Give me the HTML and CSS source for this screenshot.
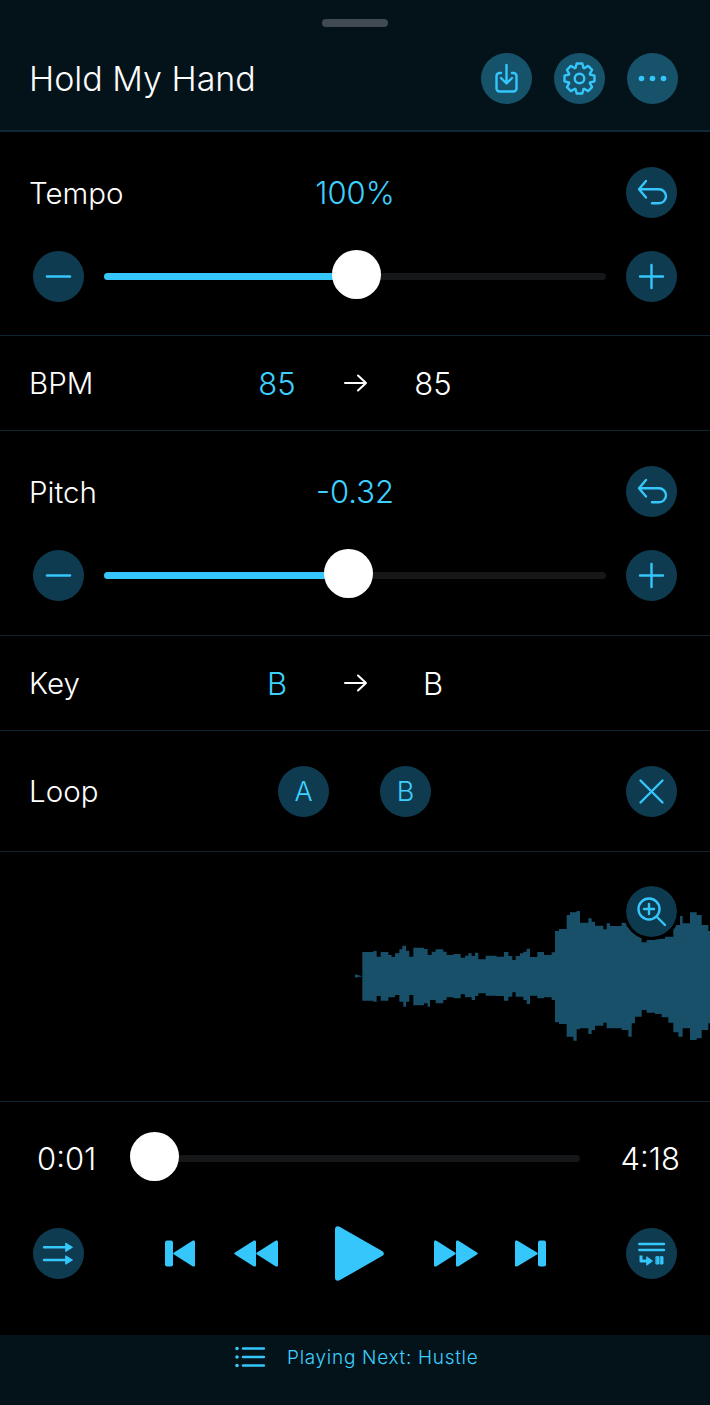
FILE: index.html
```html
<!doctype html>
<html>
<head>
    <meta charset="utf-8" />
    <title>Hold My Hand</title>
    <link rel="stylesheet" href="styles.css">
</head>
<body>
<svg class="defs" width="0" height="0">
    <symbol id="i-undo" viewBox="0 0 51 51"><path d="M20 14l-7 8.300 7 8.200M13 22.300h20a7 7 0 0 1 0 14h-7" /></symbol>
    <symbol id="i-minus" viewBox="0 0 51 51"><path d="M14 25.500h23" /></symbol>
    <symbol id="i-plus" viewBox="0 0 51 51"><path d="M14 25.500h23M25.500 14v23" /></symbol>
</svg>
<div class="screen">
    <header class="top">
        <div class="top__grip"></div>
        <h1 class="top__title">Hold My Hand</h1>
        <div class="top__actions">
            <button class="round round--bright">
                <svg class="icon" viewBox="0 0 51 51"><path d="M20 20h-1.500a3 3 0 0 0-3 3v12.500a3 3 0 0 0 3 3h14a3 3 0 0 0 3-3V23a3 3 0 0 0-3-3H31M25.500 12v18M20 25l5.500 5.500L31 25" /></svg>
            </button>
            <button class="round round--bright">
                <svg class="icon" viewBox="-25.500 -25.500 51 51"><circle r="4.800" /><polygon points="-4,-10.500 -2.800,-15 2.800,-15 4,-10.500 4.600,-10.250 8.630,-12.590 12.590,-8.630 10.250,-4.600 10.500,-4 15,-2.800 15,2.800 10.500,4 10.250,4.600 12.590,8.630 8.630,12.590 4.600,10.250 4,10.500 2.800,15 -2.800,15 -4,10.500 -4.600,10.250 -8.630,12.590 -12.590,8.630 -10.250,4.600 -10.500,4 -15,2.800 -15,-2.800 -10.500,-4 -10.250,-4.600 -12.590,-8.630 -8.630,-12.590 -4.600,-10.250" /></svg>
            </button>
            <button class="round round--bright">
                <svg class="icon icon--solid" viewBox="0 0 51 51"><circle cx="14.500" cy="25.500" r="2.800" /><circle cx="25.500" cy="25.500" r="2.800" /><circle cx="36.500" cy="25.500" r="2.800" /></svg>
            </button>
        </div>
    </header>

    <section class="panel">
        <div class="panel__head">
            <span class="label">Tempo</span>
            <span class="value">100%</span>
            <button class="round panel__reset"><svg class="icon"><use href="#i-undo" /></svg></button>
        </div>
        <div class="panel__slider">
            <button class="round"><svg class="icon"><use href="#i-minus" /></svg></button>
            <div class="track"><div class="track__fill" style="width:50.2%"></div><div class="track__thumb" style="left:50.2%"></div></div>
            <button class="round"><svg class="icon"><use href="#i-plus" /></svg></button>
        </div>
    </section>

    <section class="change">
        <span class="label">BPM</span>
        <span class="value">85</span>
        <svg class="change__arrow" viewBox="0 0 26 20"><path d="M2 10h21M15 2.500l8 7.500-8 7.500" /></svg>
        <span class="change__to">85</span>
    </section>

    <section class="panel panel--tall">
        <div class="panel__head">
            <span class="label">Pitch</span>
            <span class="value">-0.32</span>
            <button class="round panel__reset"><svg class="icon"><use href="#i-undo" /></svg></button>
        </div>
        <div class="panel__slider">
            <button class="round"><svg class="icon"><use href="#i-minus" /></svg></button>
            <div class="track"><div class="track__fill" style="width:48.8%"></div><div class="track__thumb" style="left:48.8%"></div></div>
            <button class="round"><svg class="icon"><use href="#i-plus" /></svg></button>
        </div>
    </section>

    <section class="change">
        <span class="label">Key</span>
        <span class="value">B</span>
        <svg class="change__arrow" viewBox="0 0 26 20"><path d="M2 10h21M15 2.500l8 7.500-8 7.500" /></svg>
        <span class="change__to">B</span>
    </section>

    <section class="loop">
        <span class="label loop__label">Loop</span>
        <button class="round round--text">A</button>
        <button class="round round--text">B</button>
        <button class="round loop__clear">
            <svg class="icon" viewBox="0 0 51 51"><path d="M14.500 14.500l22 22M36.500 14.500l-22 22" /></svg>
        </button>
    </section>

    <section class="wave">
        <svg class="wave__shape" viewBox="-1020 -24 2130 750">
            <path d="M45 343L67 349V276H100V273H110V290H122V276H145V285H155V291H165V280H178V268H187V257H198V272H208V290H220V263H252V267H263V258V285H275V275H287V268H310V275H320V285H340V282H362V293H375V287H385V280H395V288H405V278H415V298H437V287H470V290H492V276H505V288H517V300H527V288H540V280H550V275H560V266H570V291H592V276H612V285H635V277H645V213H657V207H680V165H690V157H710V153H720V188H745V175H755V185H765V197H790V208H800V190H810V198H845V188H860V200H905V247H920V240H945V236H975V230H1000V195H1020V168H1028V190H1050V157H1070V165H1085V195H1105V213H1110V490H1105V510H1085V535H1070V540H1050V505H1028V530H1015V517H1000V488H985V472H965V462H945V458H920V450H905V470H885V490H875V530H865V510H845V505H800V488H790V497H765V510H755V522H745V505H720V508H710V542H700V530H680V492H657V487H645V420H635V412H612V415H592V407H570V432H560V420H550V410H527V397H517V410H505V422H492V408H470V407H437V400H415V408H405V420H395V412H375V403H362V415H340V412H320V420H310V430H287V420H270V440H263V430H252V436H220V405H208V425H198V440H190V425H178V405H165V412H145V422H122V408H110V425H100V422H67V349L45 353Z" />
        </svg>
        <button class="round wave__zoom">
            <svg class="icon" viewBox="0 0 51 51"><circle cx="23" cy="23" r="10.500" /><path d="M23 18v10M18 23h10M31 31l8 8" /></svg>
        </button>
    </section>

    <section class="player">
        <div class="player__time">
            <span class="time">0:01</span>
            <div class="track track--time"><div class="track__thumb" style="left:0"></div></div>
            <span class="time">4:18</span>
        </div>
        <div class="player__controls">
            <button class="round">
                <svg class="icon" viewBox="0 0 51 51"><path d="M11 19.300h24M11 32h24" /><path class="icon__fill" d="M33 15.300l6.500 4-6.500 4zM33 28l6.500 4-6.500 4z" /></svg>
            </button>
            <div class="transport">
                <svg class="transport__prev" viewBox="0 0 31 27"><rect x="0" y="0.500" width="8" height="26" rx="2" /><path d="M30 2v23c0 1.500-1 2-2.500 1.200L9 14.500c-1-.6-1-1.400 0-2L27.500.8C29 0 30 .5 30 2z" /></svg>
                <svg class="transport__back" viewBox="0 0 44 27"><path d="M22 2v23c0 1.500-1 2-2.500 1.200L1 14.500c-1-.6-1-1.400 0-2L19.500.8C21 0 22 .5 22 2z" /><path d="M44 2v23c0 1.500-1 2-2.500 1.200L23 14.500c-1-.6-1-1.400 0-2L41.500.8C43 0 44 .5 44 2z" /></svg>
                <svg class="transport__play" viewBox="0 0 49 55"><path d="M0 3.500v48c0 3 2.500 4 5 2.600l42-24c2.500-1.400 2.500-3.800 0-5.200L5 .9C2.500-.5 0 .5 0 3.500z" /></svg>
                <svg class="transport__next" viewBox="0 0 44 27"><path d="M0 2v23c0 1.500 1 2 2.500 1.200L21 14.500c1-.6 1-1.400 0-2L2.500.8C1 0 0 .5 0 2z" /><path d="M22 2v23c0 1.500 1 2 2.500 1.200L43 14.500c1-.6 1-1.400 0-2L24.500.8C23 0 22 .5 22 2z" /></svg>
                <svg class="transport__last" viewBox="0 0 31 27"><rect x="23" y="0.500" width="8" height="26" rx="2" /><path d="M0 2v23c0 1.500 1 2 2.500 1.200L22 14.500c1-.6 1-1.400 0-2L2.500.8C1 0 0 .5 0 2z" /></svg>
            </div>
            <button class="round">
                <svg class="icon" viewBox="0 0 51 51"><path d="M13.300 16h24.700M13.300 22h24.700" /><path class="icon__hook" d="M15 27.500v5.500h7" /><path class="icon__fill" d="M21 29l5.500 4-5.500 4zM30.300 28.700h2.500V36h-2.500zM34.500 28.700H37V36h-2.500z" /></svg>
            </button>
        </div>
    </section>

    <footer class="next">
        <svg class="next__icon" viewBox="0 0 30 22"><circle cx="2" cy="2.500" r="1.800" /><circle cx="2" cy="11" r="1.800" /><circle cx="2" cy="19.500" r="1.800" /><path d="M8 2.500h21M8 11h21M8 19.500h21" /></svg>
        <span class="next__text">Playing Next: Hustle</span>
    </footer>
</div>
</body>
</html>
```

FILE: styles.css
```css
* {
    box-sizing: border-box;
}
html, body {
    margin: 0;
    background-color: #000;
}
body {
    font-family: Inter, "Liberation Sans", sans-serif;
    font-weight: 300;
    color: #fff;
}
.defs {
    position: absolute;
}
.screen {
    width: 710px;
    height: 1405px;
    display: flex;
    flex-direction: column;
    overflow: hidden;
}

/* round buttons */
.round {
    flex: none;
    width: 51px;
    height: 51px;
    padding: 0;
    border: 0;
    border-radius: 50%;
    background-color: #0f3b50;
    color: #3dd0ff;
    font-family: inherit;
    font-weight: 300;
}
.round--bright {
    background-color: #17526b;
}
.round--text {
    font-size: 27px;
}
.icon {
    display: block;
    width: 51px;
    height: 51px;
    fill: none;
    stroke: #35c6fb;
    stroke-width: 2.400;
    stroke-linecap: round;
    stroke-linejoin: round;
}
.icon--solid {
    fill: #35c6fb;
    stroke: none;
}
.icon__fill {
    fill: #35c6fb;
    stroke: #35c6fb;
    stroke-width: 1;
}
.icon__hook {
    stroke-width: 3;
    stroke-linecap: butt;
}
symbol path {
    fill: none;
    stroke: #35c6fb;
    stroke-width: 2.400;
    stroke-linecap: round;
    stroke-linejoin: round;
}

/* header */
.top {
    position: relative;
    flex: none;
    height: 132px;
    padding: 26px 32px 0 29px;
    display: flex;
    align-items: center;
    justify-content: space-between;
    background-color: #04131a;
    border-bottom: 2px solid #0e2a39;
}
.top__grip {
    position: absolute;
    top: 19px;
    left: 322px;
    width: 66px;
    height: 8px;
    border-radius: 4px;
    background-color: #3f4b50;
}
.top__title {
    margin: 0;
    font-size: 34px;
    font-weight: 300;
}
.top__actions {
    display: flex;
    gap: 22px;
}

/* text */
.label {
    font-size: 29.500px;
}
.value {
    font-size: 31px;
    color: #3dd0ff;
}

/* tempo and pitch */
.panel {
    flex: none;
    height: 204px;
    padding: 35px 33px 0;
    border-bottom: 1px solid #0e2431;
}
.panel--tall {
    height: 205px;
}
.panel__head {
    display: grid;
    grid-template-columns: 1fr auto 1fr;
    align-items: center;
    margin-bottom: 33px;
}
.panel__head .label {
    margin-left: -4px;
}
.panel__reset {
    justify-self: end;
}
.panel__slider {
    display: flex;
    align-items: center;
    gap: 20px;
}
.track {
    position: relative;
    flex: 1;
    height: 7px;
    border-radius: 4px;
    background-color: #151719;
}
.track__fill {
    height: 100%;
    border-radius: 4px;
    background-color: #35c6fb;
}
.track__thumb {
    position: absolute;
    top: -23px;
    width: 49px;
    height: 49px;
    margin-left: -24.500px;
    border-radius: 50%;
    background-color: #fff;
}

/* bpm and key */
.change {
    flex: none;
    height: 95px;
    padding-left: 29px;
    display: grid;
    grid-template-columns: 208px 80px 76px 80px;
    align-items: center;
    justify-items: center;
    border-bottom: 1px solid #0e2431;
}
.change .label {
    justify-self: start;
}
.change__arrow {
    width: 26px;
    height: 20px;
    margin-left: 2px;
    fill: none;
    stroke: #fff;
    stroke-width: 2;
    stroke-linecap: round;
    stroke-linejoin: round;
}
.change__to {
    font-size: 31px;
}

/* loop */
.loop {
    flex: none;
    height: 121px;
    padding: 0 33px 0 29px;
    display: flex;
    align-items: center;
    gap: 51px;
    border-bottom: 1px solid #0e2431;
}
.loop__label {
    width: 198px;
}
.loop__clear {
    margin-left: auto;
}

/* waveform */
.wave {
    position: relative;
    flex: none;
    height: 250px;
    border-bottom: 1px solid #0e2431;
}
.wave__shape {
    display: block;
    width: 710px;
    height: 250px;
    fill: #18506a;
}
.wave__zoom {
    position: absolute;
    top: 31px;
    left: 623px;
    width: 57px;
    height: 57px;
    border: 3px solid #000;
    background-color: #0e3a4f;
    background-clip: padding-box;
}

/* player */
.player {
    flex: none;
    height: 233px;
    padding: 0 30px 0 33px;
}
.player__time {
    display: flex;
    align-items: center;
    height: 112px;
    margin-left: 4px;
}
.time {
    font-size: 31px;
}
.track--time {
    margin: 0 41px 0 58px;
}
.player__controls {
    display: flex;
    align-items: center;
    justify-content: space-between;
    margin-top: 12px;
    margin-right: 3px;
}
.transport {
    display: flex;
    align-items: center;
    fill: #35c6fb;
}
.transport__prev,
.transport__last {
    width: 31px;
    height: 27px;
}
.transport__back,
.transport__next {
    width: 44px;
    height: 27px;
}
.transport__prev {
    margin-right: 38px;
}
.transport__play {
    width: 49px;
    height: 55px;
    margin: 0 50px 0 57px;
}
.transport__last {
    margin-left: 37px;
}

/* playing next */
.next {
    flex: none;
    height: 70px;
    padding: 11px 0 0 235px;
    display: flex;
    align-items: flex-start;
    gap: 22px;
    background-color: #04131a;
    color: #3dd0ff;
}
.next__icon {
    width: 30px;
    height: 22px;
    fill: #35c6fb;
    stroke: none;
}
.next__icon path {
    fill: none;
    stroke: #35c6fb;
    stroke-width: 2.400;
    stroke-linecap: round;
}
.next__text {
    font-size: 19px;
    line-height: 23px;
    letter-spacing: 0.700px;
}
```
